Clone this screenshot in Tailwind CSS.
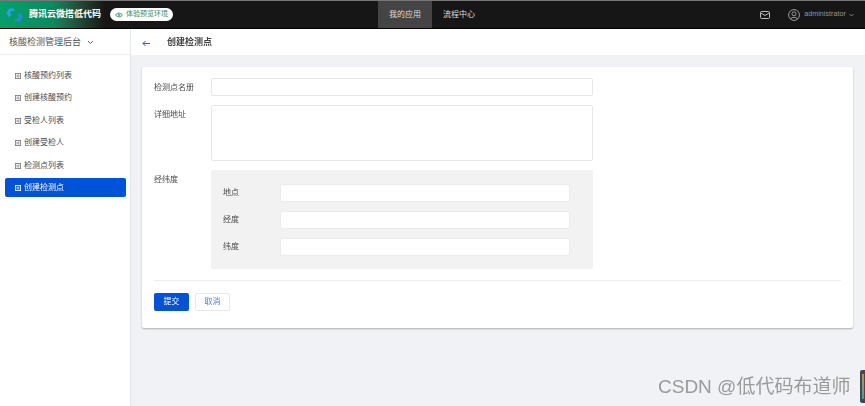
<!DOCTYPE html>
<html lang="zh-CN">
  <head>
    <meta charset="UTF-8" />
    <meta name="viewport" content="width=device-width, initial-scale=1.0" />
    <title>创建检测点</title>
    <script src="https://cdn.jsdelivr.net/npm/@tailwindcss/browser@4"></script>
  </head>
  <body class="bg-[#f1f2f6] overflow-hidden font-['Liberation_Sans','Noto_Sans_CJK_SC',sans-serif]">
    <div class="relative w-[865px] h-[406px] flex flex-col text-[8px] text-[#4a4a4a] blur-[0.4px]">
      <!-- Top bar -->
      <header class="h-[29px] shrink-0 flex bg-[#161616] border-t border-t-[#777] border-b border-b-black text-white">
        <div class="w-[105px] flex items-center pl-[6px] gap-[6px] bg-gradient-to-r from-[#07a06a] via-[#0a8a60] to-[#161616]">
          <svg width="17" height="14" viewBox="0 0 17 14" class="shrink-0">
            <path d="M8 0.5 L3 0.5 L0.5 5 L3 9.5 L5.5 7 L4 5 L5 3 L8 3 Z" fill="#2a9cf5" />
            <path d="M9 13.5 L14 13.5 L16.5 9 L14 4.5 L11.5 7 L13 9 L12 11 L9 11 Z" fill="#2a84f0" />
          </svg>
          <span class="text-[9px] font-bold whitespace-nowrap">腾讯云微搭低代码</span>
        </div>
        <div class="flex items-center">
          <span class="ml-[5px] h-[13px] w-[63px] rounded-full bg-white text-[#2e8a66] text-[7px] flex items-center justify-center gap-[3px]">
            <svg width="8" height="6" viewBox="0 0 8 6" fill="none" stroke="#2e8a66" stroke-width="0.8">
              <path d="M0.5 3 C2 0.5 6 0.5 7.5 3 C6 5.5 2 5.5 0.5 3 Z" />
              <circle cx="4" cy="3" r="1" />
            </svg>
            体验预览环境
          </span>
        </div>
        <nav class="ml-[205px] flex text-[8px] text-[#ddd]">
          <a class="w-[54px] flex items-center justify-center bg-[#444]">我的应用</a>
          <a class="w-[54px] flex items-center justify-center">流程中心</a>
        </nav>
        <div class="ml-auto flex items-center pr-[11px] text-[#999]">
          <svg width="10" height="8" viewBox="0 0 10 8" fill="none" stroke="#bbb" stroke-width="1">
            <rect x="0.5" y="0.5" width="9" height="7" rx="1" />
            <path d="M1 2 L5 4.5 L9 2" />
          </svg>
          <svg class="ml-[18px]" width="12" height="12" viewBox="0 0 12 12" fill="none" stroke="#aaa" stroke-width="0.9">
            <circle cx="6" cy="6" r="5.4" />
            <circle cx="6" cy="4.8" r="2" />
            <path d="M2.6 10 C3.5 7.8 8.5 7.8 9.4 10" />
          </svg>
          <span class="ml-[4px] text-[7px] tracking-[0.1px]">administrator</span>
          <svg class="ml-[3px]" width="5" height="4" viewBox="0 0 5 4" fill="none" stroke="#999" stroke-width="0.8">
            <path d="M0.5 1 L2.5 3 L4.5 1" />
          </svg>
        </div>
      </header>

      <div class="flex flex-1 min-h-0">
        <!-- Sidebar -->
        <aside class="w-[131px] shrink-0 bg-white border-r border-[#e6e7eb]">
          <div class="h-[26px] flex items-center pl-[9px] pt-[2px] text-[9px] text-[#555] border-b border-[#eceef2]">
            核酸检测管理后台
            <svg class="ml-[6px]" width="7" height="5" viewBox="0 0 7 5" fill="none" stroke="#666" stroke-width="1">
              <path d="M1 1 L3.5 3.5 L6 1" />
            </svg>
          </div>
          <ul class="mt-[10.5px] pl-[5px] pr-[4px] flex flex-col gap-[3.5px]">
            <li class="h-[19px] flex items-center pl-[10px] pt-[1px] gap-[3px]">
              <svg width="6" height="6" viewBox="0 0 6 6" fill="none" stroke="#777" stroke-width="0.8"><rect x="0.4" y="0.4" width="5.2" height="5.2" /><path d="M1.5 2.2 H4.5 M1.5 3.8 H4.5" /></svg>
              核酸预约列表
            </li>
            <li class="h-[19px] flex items-center pl-[10px] pt-[1px] gap-[3px]">
              <svg width="6" height="6" viewBox="0 0 6 6" fill="none" stroke="#777" stroke-width="0.8"><rect x="0.4" y="0.4" width="5.2" height="5.2" /><path d="M1.5 2.2 H4.5 M1.5 3.8 H4.5" /></svg>
              创建核酸预约
            </li>
            <li class="h-[19px] flex items-center pl-[10px] pt-[1px] gap-[3px]">
              <svg width="6" height="6" viewBox="0 0 6 6" fill="none" stroke="#777" stroke-width="0.8"><rect x="0.4" y="0.4" width="5.2" height="5.2" /><path d="M1.5 2.2 H4.5 M1.5 3.8 H4.5" /></svg>
              受检人列表
            </li>
            <li class="h-[19px] flex items-center pl-[10px] pt-[1px] gap-[3px]">
              <svg width="6" height="6" viewBox="0 0 6 6" fill="none" stroke="#777" stroke-width="0.8"><rect x="0.4" y="0.4" width="5.2" height="5.2" /><path d="M1.5 2.2 H4.5 M1.5 3.8 H4.5" /></svg>
              创建受检人
            </li>
            <li class="h-[19px] flex items-center pl-[10px] pt-[1px] gap-[3px]">
              <svg width="6" height="6" viewBox="0 0 6 6" fill="none" stroke="#777" stroke-width="0.8"><rect x="0.4" y="0.4" width="5.2" height="5.2" /><path d="M1.5 2.2 H4.5 M1.5 3.8 H4.5" /></svg>
              检测点列表
            </li>
            <li class="h-[19px] flex items-center pl-[10px] pt-[1px] gap-[3px] rounded-[2px] bg-[#0052d9] text-white">
              <svg width="6" height="6" viewBox="0 0 6 6" fill="none" stroke="#fff" stroke-width="0.8"><rect x="0.4" y="0.4" width="5.2" height="5.2" /><path d="M1.5 2.2 H4.5 M1.5 3.8 H4.5" /></svg>
              创建检测点
            </li>
          </ul>
        </aside>

        <main class="flex-1 min-w-0 flex flex-col">
          <div class="h-[26px] shrink-0 bg-white flex items-center pl-[11px] pt-[2px]">
            <svg width="9" height="7" viewBox="0 0 9 7" fill="none" stroke="#0052d9" stroke-width="0.9">
              <path d="M8 3.5 H1 M3.5 1 L1 3.5 L3.5 6" />
            </svg>
            <span class="ml-[16px] text-[9px] font-bold text-[#444]">创建检测点</span>
          </div>

          <!-- Form card -->
          <div class="mt-[12px] ml-[11px] w-[711px] h-[261px] bg-white rounded-[2px] shadow-[0_1px_2px_rgba(0,0,0,0.28)] px-[12px] pt-[11px]">
            <div class="flex">
              <label class="w-[57px] h-[18px] leading-[20px]">检测点名册</label>
              <div class="w-[382px] h-[18px] rounded-[2px] border border-[#e7e7e7] bg-white"></div>
            </div>
            <div class="flex mt-[9px]">
              <label class="w-[57px] h-[18px] leading-[20px]">详细地址</label>
              <div class="w-[382px] h-[56px] rounded-[2px] border border-[#e7e7e7] bg-white"></div>
            </div>
            <div class="flex mt-[9px]">
              <label class="w-[57px] h-[18px] leading-[20px]">经纬度</label>
              <div class="w-[382px] h-[99px] bg-[#f2f2f2] rounded-[1px] pl-[12px] pt-[14px] flex flex-col gap-[9px]">
                <div class="flex items-center">
                  <span class="w-[57px]">地点</span>
                  <div class="w-[290px] h-[18px] rounded-[2px] bg-white border border-[#ececec]"></div>
                </div>
                <div class="flex items-center">
                  <span class="w-[57px]">经度</span>
                  <div class="w-[290px] h-[18px] rounded-[2px] bg-white border border-[#ececec]"></div>
                </div>
                <div class="flex items-center">
                  <span class="w-[57px]">纬度</span>
                  <div class="w-[290px] h-[18px] rounded-[2px] bg-white border border-[#ececec]"></div>
                </div>
              </div>
            </div>
            <div class="mt-[11px] border-t border-[#eeeeee]"></div>
            <div class="mt-[12px] flex gap-[6px]">
              <button class="w-[35px] h-[18px] rounded-[2px] bg-[#0052d9] text-white">提交</button>
              <button class="w-[35px] h-[18px] rounded-[2px] bg-white border border-[#e7e7e7] text-[#4d7fe0]">取消</button>
            </div>
          </div>
        </main>
      </div>

      <!-- Watermark over the page -->
      <span class="absolute left-[658px] top-[376px] text-[19px] leading-[22px] text-[#9a9a9a] whitespace-nowrap">CSDN @低代码布道师</span>
      <div class="absolute left-[860px] top-[370px] w-[5px] h-[33px] rounded-l-[2px] bg-[#3c4a55] pl-[2px] py-[4px]">
        <div class="w-[2px] h-full bg-gradient-to-b from-[#b8963f] to-[#3f9c8a]"></div>
      </div>
    </div>
  </body>
</html>
